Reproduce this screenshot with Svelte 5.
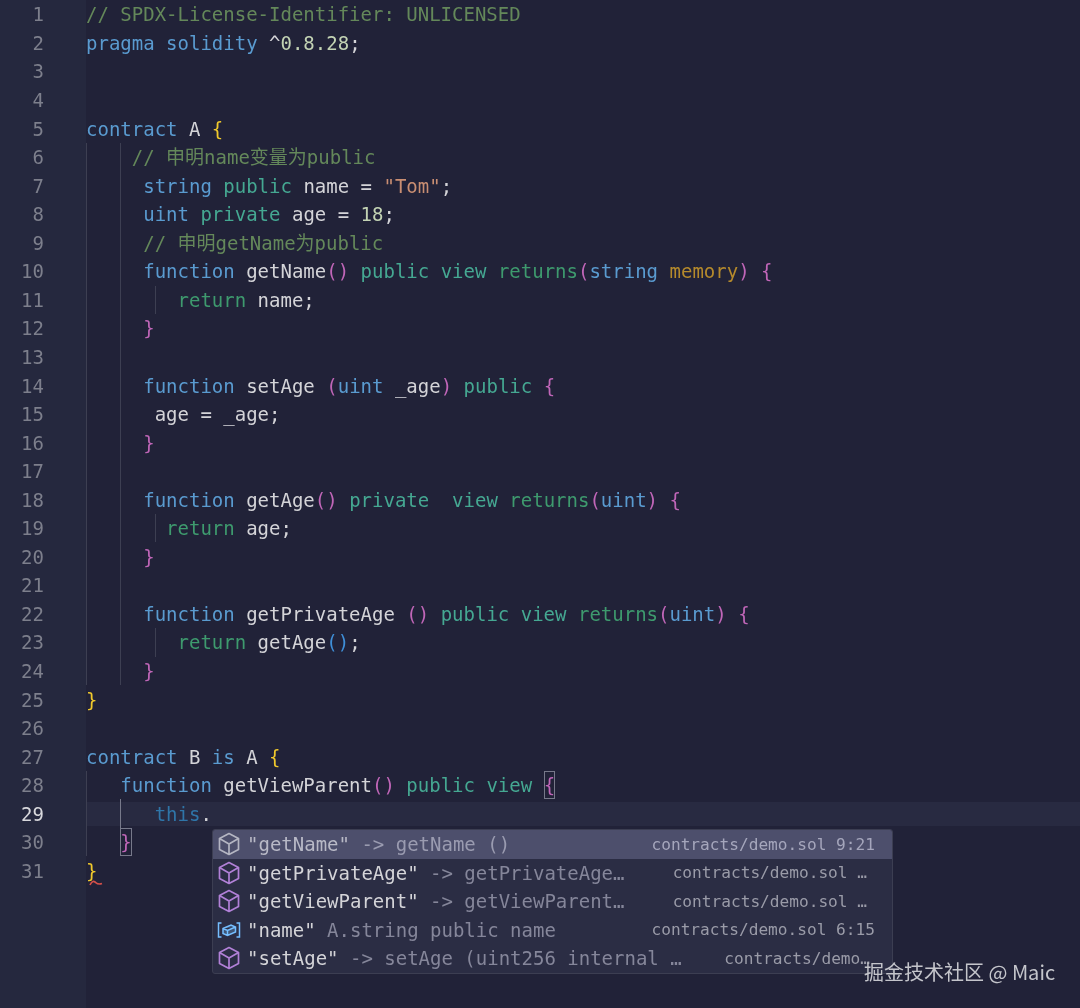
<script lang="ts">
  const LINE = 28.55;
  const CHAR = 11.44;

  // [class, text] segments, one array per editor line
  const kw = (t: string) => ['kw', t];
  const mod = (t: string) => ['mod', t];
  const ret = (t: string) => ['ret', t];
  const txt = (t: string) => ['txt', t];
  const pk = (t: string) => ['pink', t];
  const yl = (t: string) => ['yellow', t];
  const cm = (t: string) => ['comment', t];

  const lines = [
    [cm('// SPDX-License-Identifier: UNLICENSED')],
    [kw('pragma solidity'), txt(' ^'), ['lit', '0.8.28'], txt(';')],
    [],
    [],
    [kw('contract'), txt(' A '), yl('{')],
    [cm('    // 申明name变量为public')],
    [txt('     '), kw('string'), txt(' '), mod('public'), txt(' name = '), ['str', '"Tom"'], txt(';')],
    [txt('     '), kw('uint'), txt(' '), mod('private'), txt(' age = '), ['lit', '18'], txt(';')],
    [cm('     // 申明getName为public')],
    [txt('     '), kw('function'), txt(' getName'), pk('()'), txt(' '), mod('public view'), txt(' '), ret('returns'), pk('('), kw('string'), txt(' '), ['mem', 'memory'], pk(')'), txt(' '), pk('{')],
    [txt('        '), ret('return'), txt(' name;')],
    [txt('     '), pk('}')],
    [],
    [txt('     '), kw('function'), txt(' setAge '), pk('('), kw('uint'), txt(' _age'), pk(')'), txt(' '), mod('public'), txt(' '), pk('{')],
    [txt('      age = _age;')],
    [txt('     '), pk('}')],
    [],
    [txt('     '), kw('function'), txt(' getAge'), pk('()'), txt(' '), mod('private  view'), txt(' '), ret('returns'), pk('('), kw('uint'), pk(')'), txt(' '), pk('{')],
    [txt('       '), ret('return'), txt(' age;')],
    [txt('     '), pk('}')],
    [],
    [txt('     '), kw('function'), txt(' getPrivateAge '), pk('()'), txt(' '), mod('public view'), txt(' '), ret('returns'), pk('('), kw('uint'), pk(')'), txt(' '), pk('{')],
    [txt('        '), ret('return'), txt(' getAge'), ['paren', '()'], txt(';')],
    [txt('     '), pk('}')],
    [yl('}')],
    [],
    [kw('contract'), txt(' B '), kw('is'), txt(' A '), yl('{')],
    [txt('   '), kw('function'), txt(' getViewParent'), pk('()'), txt(' '), mod('public view'), txt(' '), ['boxed pink', '{']],
    [txt('      '), ['this', 'this'], txt('.')],
    [txt('   '), ['boxed pink', '}']],
    [yl('}')]
  ];

  // indent guides: column, first and last line (0-based)
  const guides = [
    { col: 0, from: 5, to: 23 },
    { col: 3, from: 5, to: 23 },
    { col: 6, from: 10, to: 10 },
    { col: 6, from: 18, to: 18 },
    { col: 6, from: 22, to: 22 },
    { col: 0, from: 27, to: 29 },
    { col: 3, from: 28, to: 28, active: true }
  ];

  const items = [
    { label: '"getName"', desc: ' -> getName ()', path: 'contracts/demo.sol 9:21', kind: 'method', selected: true },
    { label: '"getPrivateAge"', desc: ' -> getPrivateAge…', path: 'contracts/demo.sol …', kind: 'method', pad: 'short' },
    { label: '"getViewParent"', desc: ' -> getViewParent…', path: 'contracts/demo.sol …', kind: 'method', pad: 'short' },
    { label: '"name"', desc: ' A.string public name', path: 'contracts/demo.sol 6:15', kind: 'field' },
    { label: '"setAge"', desc: ' -> setAge (uint256 internal …', path: 'contracts/demo…', kind: 'method', pad: 'cut' }
  ];
</script>

<div class="editor">
  <div class="gutter">
    {#each lines as _, i}
      <div class="ln" class:active={i === 28}>{i + 1}</div>
    {/each}
  </div>
  <div class="code">
    {#each lines as line, i}
      <div class="line" class:current={i === 28}>{#each line as seg}<span class={seg[0]}>{seg[1]}</span>{/each}</div>
    {/each}

    {#each guides as g}
      <i class="guide" class:on={g.active} style="left:{g.col * CHAR}px;top:{g.from * LINE}px;height:{(g.to - g.from + 1) * LINE}px"></i>
    {/each}

    <svg class="squiggle" width="14" height="8" viewBox="0 0 14 8">
      <path d="M1 6 C2.5 3 4 1.5 6 3 S9 6 13 4.5" fill="none" stroke="#d4504a" stroke-width="1.6" />
    </svg>

    <div class="suggest">
      {#each items as item}
        <div class="item" class:selected={item.selected}>
          {#if item.kind === 'method'}
            <svg class="icon" width="24" height="24" viewBox="0 0 24 24" fill="none" stroke-width="1.7" stroke-linejoin="round">
              <path d="M12 1.5 L21.5 6.5 V17.5 L12 22.5 L2.5 17.5 V6.5 Z M2.5 6.5 L12 12 L21.5 6.5 M12 12 V22.5" />
            </svg>
          {:else}
            <svg class="icon field" width="24" height="24" viewBox="0 0 24 24" fill="none" stroke-width="1.5">
              <path d="M4.5 5 H1.5 V19 H4.5 M19.5 5 H22.5 V19 H19.5" />
              <path d="M6 10.5 L14 7 L18.5 9 V14 L10.5 17.5 L6 15.5 Z M6 10.5 L10.5 12.5 L18.5 9 M10.5 12.5 V17.5" fill="#75beff44" />
            </svg>
          {/if}
          <span class="label">{item.label}</span><span class="desc">{item.desc}</span>
          <span class="path {item.pad ?? ''}">{item.path}</span>
        </div>
      {/each}
    </div>
  </div>
  <div class="mark">掘金技术社区 @ Maic</div>
</div>

<style>
  :global(body) { background: #212238; }
  .editor {
    position: relative;
    display: flex;
    width: 1080px;
    height: 1008px;
    overflow: hidden;
    background: #212238;
    font-family: "DejaVu Sans Mono", "Noto Sans CJK SC", monospace;
    font-size: 19px;
    color: #d4d4d8;
    filter: blur(0.4px);
  }
  .gutter { width: 86px; background: #25283e; flex: none; padding-top: 0.4px; }
  .ln {
    width: 44px;
    height: 28.55px;
    line-height: 28.55px;
    text-align: right;
    color: #7d7f8c;
  }
  .ln.active { color: #d8d8dc; }
  .code { position: relative; flex: 1; padding-top: 0.4px; }
  .line {
    height: 28.55px;
    line-height: 28.55px;
    white-space: pre;
  }
  .line.current { background: linear-gradient(#282a41, #282a41) center / 100% 24px no-repeat; }
  .guide { position: absolute; width: 1px; background: #3d3f52; }
  .guide.on { background: #77798a; }

  .kw { color: #5a9bd0; }
  .mod { color: #45a892; }
  .ret { color: #3e9a6e; }
  .txt { color: #d4d4d8; }
  .pink { color: #c066b8; }
  .yellow { color: #f0c92c; }
  .comment { color: #64885a; }
  .str { color: #c98e72; }
  .lit { color: #c3d3b4; }
  .mem { color: #b58a2c; }
  .paren { color: #3f8fd8; }
  .this { color: #2f75a8; }
  .boxed {
    outline: 1px solid #77798a;
    outline-offset: -1px;
    display: inline-block;
    height: 28px;
  }
  .squiggle { position: absolute; left: 3px; top: 879px; }

  .suggest {
    position: absolute;
    left: 126px;
    top: 829px;
    width: 679px;
    background: #2b2d44;
    border: 1px solid #3c3e52;
    border-radius: 3px;
    overflow: hidden;
  }
  .item {
    display: flex;
    align-items: center;
    height: 28.5px;
    padding-left: 4px;
    white-space: pre;
  }
  .item.selected { background: #4d4f6c; }
  .icon { flex: none; width: 24px; height: 24px; margin-right: 6px; stroke: #b180d7; }
  .icon.field { stroke: #75beff; }
  .selected .icon { stroke: #b4b5c2; }
  .label { color: #d4d4d8; }
  .selected .label { color: #b8b9c6; }
  .desc { color: #85869a; }
  .selected .desc { color: #9a9bb0; }
  .path {
    margin-left: auto;
    padding-right: 17px;
    font-size: 16.15px;
    color: #9a9ba8;
  }
  .path.short { padding-right: 25px; }
  .path.cut { padding-right: 22px; }
  .selected .path { color: #a5a6bc; }

  .mark {
    position: absolute;
    left: 864px;
    top: 958px;
    font-family: "Noto Sans CJK SC", sans-serif;
    font-size: 20px;
    line-height: 28px;
    color: #c4c5cb;
  }
</style>
